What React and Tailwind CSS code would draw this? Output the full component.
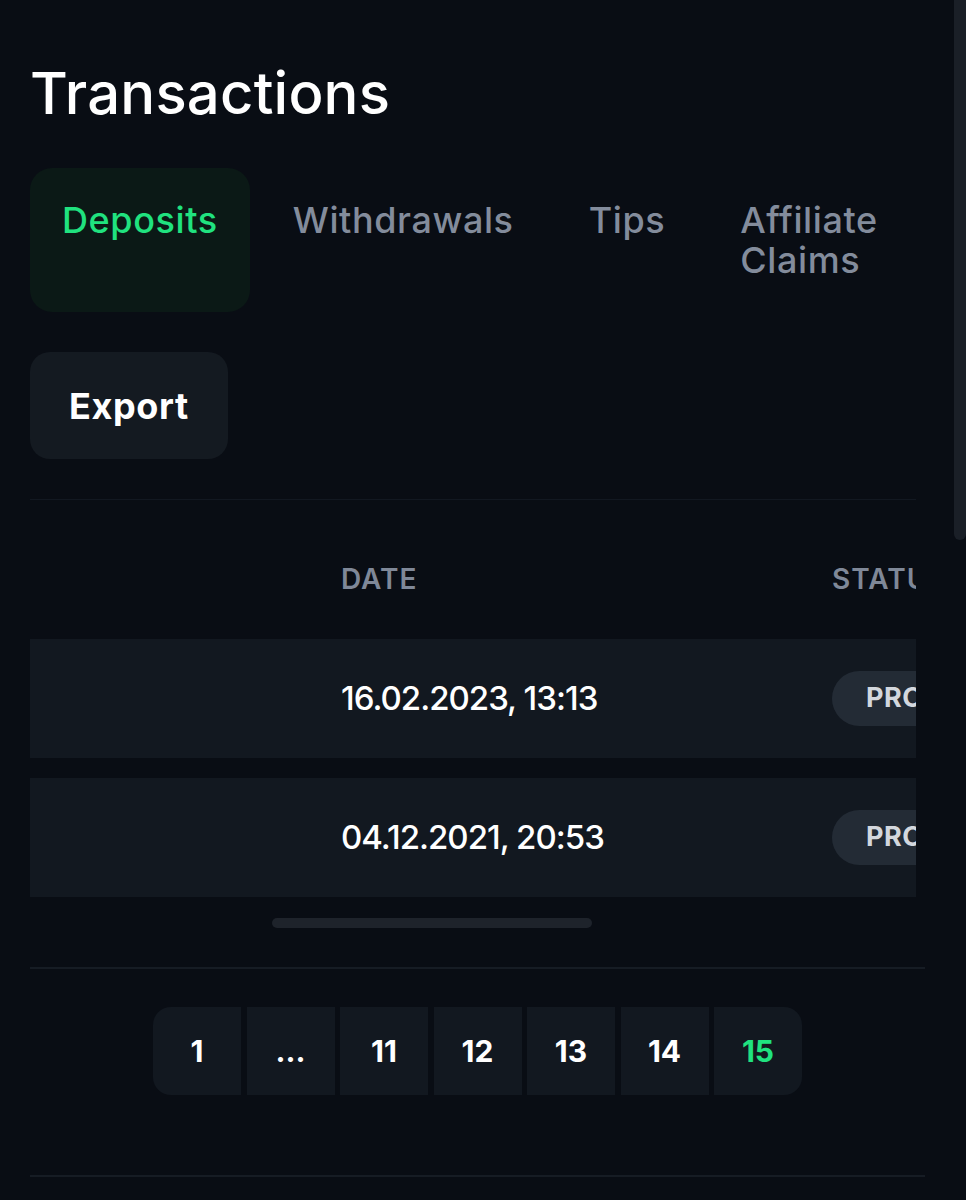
import React from "react";

const font = { fontFamily: "Inter, 'Noto Sans', sans-serif" };

function Tab({ children, active }) {
  return (
    <div
      className={
        "px-[32px] py-[32px] rounded-[22px] text-[36px] leading-[40px] font-medium tracking-[0.6px] " +
        (active ? "bg-[#0b1916] text-[#20e27f] whitespace-nowrap" : "text-[#838c9c]")
      }
    >
      {children}
    </div>
  );
}

function Row({ date }) {
  return (
    <div className="flex items-center h-[119px] bg-[#121820]">
      <div className="w-[311px] shrink-0" />
      <div className="w-[491px] shrink-0 text-[33px] font-medium text-white tracking-[-1px]">{date}</div>
      <div className="shrink-0">
        <div className="h-[55px] rounded-full bg-[#232b35] pl-[34px] pr-[34px] flex items-center text-[27px] font-bold text-[#d3d7dd] tracking-[0.5px]">
          PROCESSED
        </div>
      </div>
    </div>
  );
}

export default function App() {
  const pages = ["1", "...", "11", "12", "13", "14", "15"];
  return (
    <div className="min-h-[1200px] bg-[#090d14] flex" style={font}>
      <main className="flex-1 min-w-0 pl-[30px] pr-[29px] pt-[60px]">
        <h1 className="text-[58px] leading-[67px] font-medium text-white tracking-[0.2px]">Transactions</h1>

        <div className="mt-[41px] flex gap-[11px] w-[886px]">
          <Tab active>Deposits</Tab>
          <Tab>
            <span className="whitespace-nowrap">Withdrawals</span>
          </Tab>
          <Tab>
            <span className="whitespace-nowrap">Tips</span>
          </Tab>
          <Tab>Affiliate Claims</Tab>
        </div>

        <button className="mt-[40px] h-[107px] px-[39px] rounded-[20px] bg-[#141a21] text-white text-[36px] font-bold tracking-[0.6px] flex items-center">
          Export
        </button>

        <div className="mt-[40px] w-[886px] h-[1px] bg-[#121821]" />

        <div className="w-[886px] overflow-hidden">
          <div className="w-[1300px]">
            <div className="mt-[48px] h-[62px] flex items-center text-[28px] font-semibold text-[#7f8898] tracking-[1px]">
              <div className="w-[311px] shrink-0" />
              <div className="w-[491px] shrink-0">DATE</div>
              <div className="shrink-0">STATUS</div>
            </div>
            <div className="mt-[29px] flex flex-col gap-[20px]">
              <Row date="16.02.2023, 13:13" />
              <Row date="04.12.2021, 20:53" />
            </div>
          </div>
          <div className="mt-[21px] h-[10px] ml-[242px] w-[320px] rounded-full bg-[#1e232b]" />
        </div>

        <div className="mt-[39px] h-[2px] bg-[#161c24]" />

        <div className="mt-[38px] flex justify-center">
          <div className="flex gap-[5.5px]">
            {pages.map((p, i) => (
              <div
                key={p}
                className={
                  "w-[88px] h-[88px] bg-[#121820] flex items-center justify-center text-[30px] font-bold " +
                  (i === 0 ? "rounded-l-[18px] " : "") +
                  (i === pages.length - 1 ? "rounded-r-[18px] text-[#20e27f]" : "text-white")
                }
              >
                {p}
              </div>
            ))}
          </div>
        </div>

        <div className="mt-[80px] h-[2px] bg-[#161c24]" />
        <div className="h-[100px]" />
      </main>
      <div className="w-[12px] shrink-0">
        <div className="h-[540px] w-full bg-[#1a1f27] rounded-b-full" />
      </div>
    </div>
  );
}
